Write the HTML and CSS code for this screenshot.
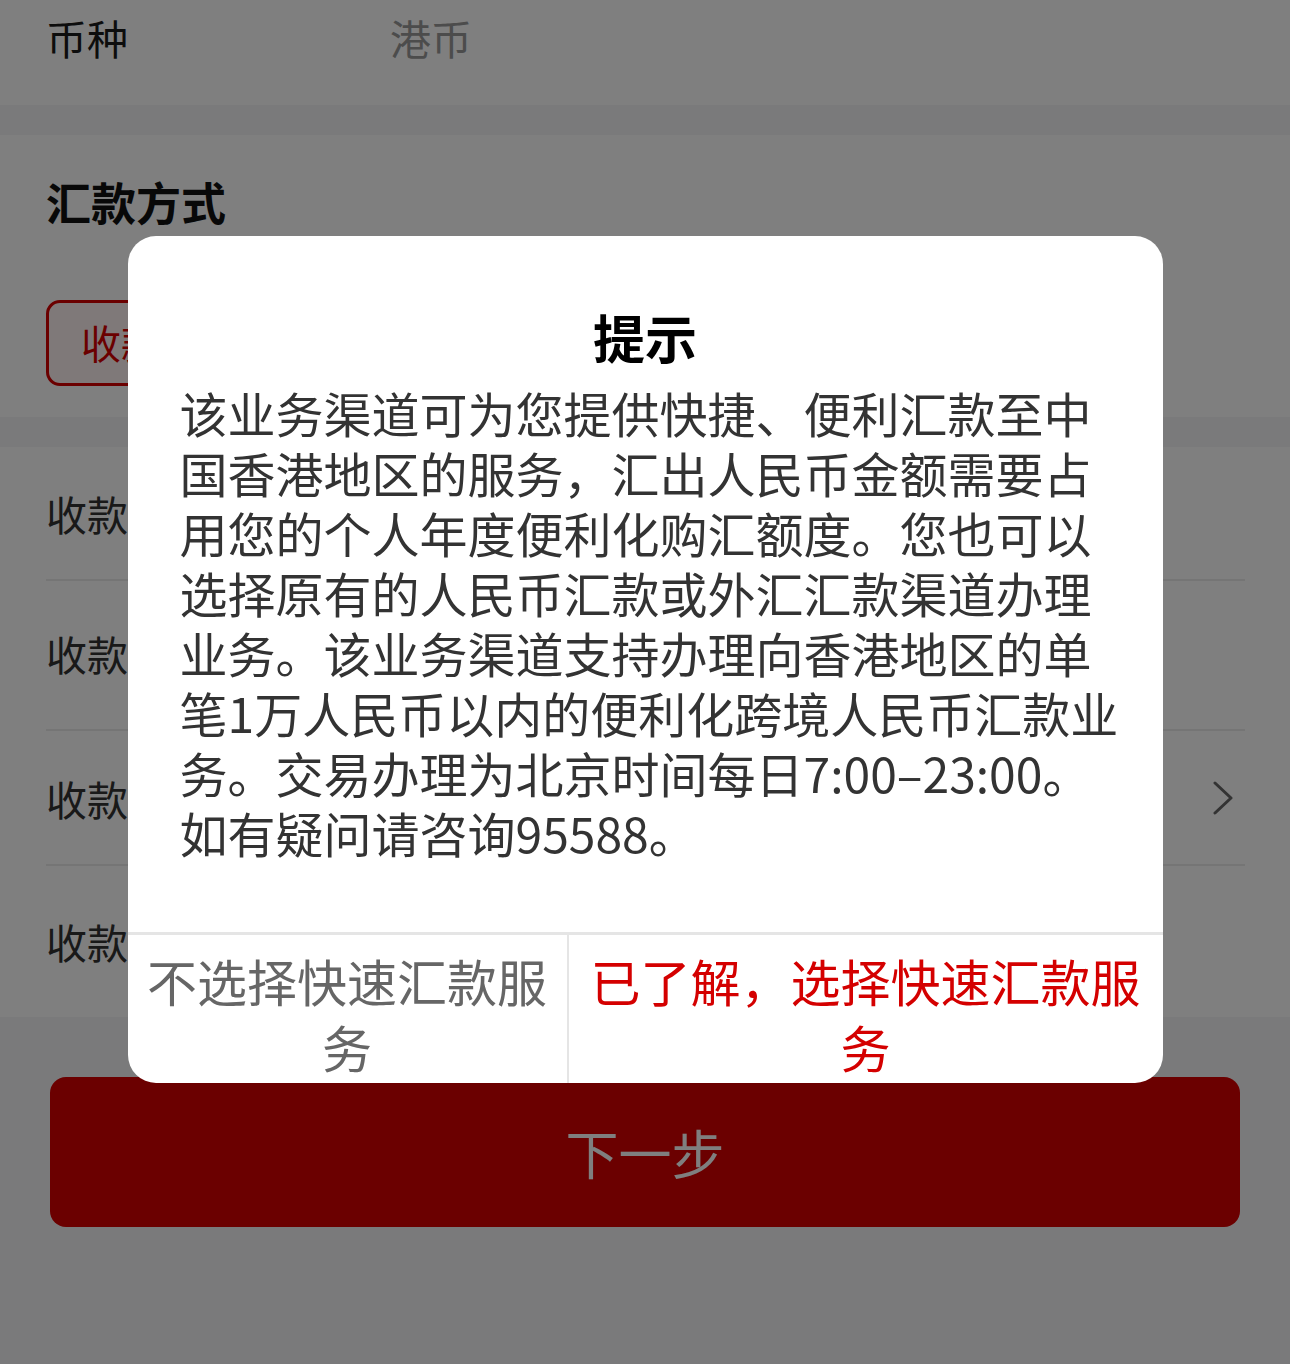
FILE: index.html
```html
<!DOCTYPE html>
<html lang="zh-CN">
<head>
<meta charset="utf-8">
<title>汇款</title>
<link rel="stylesheet" href="styles.css">
</head>
<body>
<div class="page">
  <section class="card currency">
    <span class="label">币种</span>
    <span class="value">港币</span>
  </section>

  <section class="card method">
    <h2 class="method-title">汇款方式</h2>
    <div class="method-options">
      <div class="option active">收款人账户汇款</div>
      <div class="option">收款人手机号汇款</div>
    </div>
  </section>

  <section class="card list">
    <div class="list-row r1"><span class="row-label">收款人姓名</span></div>
    <div class="list-row r2"><span class="row-label">收款人账号</span></div>
    <div class="list-row r3"><span class="row-label">收款银行</span>
      <svg class="chev" viewBox="0 0 20 34" width="20" height="34"><path d="M2 2 L18 17 L2 32" fill="none" stroke="#666" stroke-width="3" stroke-linecap="round" stroke-linejoin="round"/></svg>
    </div>
    <div class="list-row r4"><span class="row-label">收款人地址</span></div>
  </section>

  <div class="footer">
    <button class="next">下一步</button>
  </div>
</div>

<div class="overlay">
  <div class="modal">
    <h3 class="modal-title">提示</h3>
    <p class="modal-body">该业务渠道可为您提供快捷、便利汇款至中国香港地区的服务，汇出人民币金额需要占用您的个人年度便利化购汇额度。您也可以选择原有的人民币汇款或外汇汇款渠道办理业务。该业务渠道支持办理向香港地区的单笔1万人民币以内的便利化跨境人民币汇款业务。交易办理为北京时间每日7:00–23:00。如有疑问请咨询95588。</p>
    <div class="modal-actions">
      <div class="act cancel">不选择快速汇款服务</div>
      <div class="act confirm">已了解，选择快速汇款服务</div>
    </div>
  </div>
</div>
</body>
</html>
```

FILE: styles.css
```css
html, body {
  margin: 0;
  padding: 0;
}
body {
  background: #f4f5f6;
  font-family: "Noto Sans CJK SC", "Noto Sans", sans-serif;
  width: 1290px;
  height: 1364px;
  overflow: hidden;
}
.page {
  display: flex;
  flex-direction: column;
  gap: 30px;
}
.card {
  background: #fff;
}
.currency {
  height: 105px;
  box-sizing: border-box;
  padding: 7px 46px 0;
  display: flex;
  font-size: 41px;
  line-height: 60px;
}
.currency .label {
  width: 344px;
  color: #1a1a1a;
}
.currency .value {
  color: #999;
}
.method {
  height: 282px;
  box-sizing: border-box;
  padding: 34px 46px 0;
}
.method-title {
  margin: 0;
  font-size: 45px;
  line-height: 66px;
  font-weight: 700;
  color: #111;
}
.method-options {
  margin-top: 65px;
  display: flex;
  gap: 30px;
}
.option {
  height: 86px;
  box-sizing: border-box;
  padding: 0 32px;
  border: 3px solid #ddd;
  border-radius: 14px;
  font-size: 40px;
  line-height: 78px;
  color: #333;
}
.option.active {
  border-color: #d60000;
  background: #fff2f2;
  color: #d60000;
}
.list {
  height: 570px;
  padding: 0 45px 0 46px;
}
.list-row {
  display: flex;
  align-items: center;
  border-bottom: 2px solid #ebebeb;
  font-size: 41px;
  color: #333;
  box-sizing: border-box;
}
.list-row.r1 { height: 134px; }
.list-row.r2 { height: 150px; align-items: flex-end; padding-bottom: 46px; }
.list-row.r3 { height: 135px; justify-content: space-between; }
.list-row.r4 { height: 149px; border-bottom: none; align-items: flex-start; padding-top: 45px; }
.chev {
  margin-right: 12px;
}
.footer {
  padding: 30px 50px 0;
}
.next {
  display: block;
  width: 1190px;
  height: 150px;
  border: none;
  border-radius: 16px;
  background: #d60000;
  color: #fff;
  font-family: "Noto Sans CJK SC", "Noto Sans", sans-serif;
  font-size: 53px;
  padding: 0;
}

.overlay {
  position: fixed;
  inset: 0;
  background: rgba(0, 0, 0, 0.5);
  display: flex;
  justify-content: center;
  align-items: flex-start;
  padding-top: 236px;
}
.modal {
  width: 1035px;
  background: #fff;
  border-radius: 28px;
  overflow: hidden;
}
.modal-title {
  margin: 62px 0 0;
  text-align: center;
  font-size: 52px;
  line-height: 78px;
  font-weight: 700;
  color: #000;
}
.modal-body {
  margin: 6px 0 0;
  padding: 0 40px 70px 52px;
  font-size: 48px;
  line-height: 60px;
  color: #333;
}
.modal-actions {
  display: flex;
  border-top: 3px solid #e5e5e5;
  height: 148px;
}
.act {
  box-sizing: border-box;
  padding: 12px 16px 0;
  font-size: 50px;
  line-height: 66px;
  text-align: center;
}
.cancel {
  width: 441px;
  color: #666;
  border-right: 2px solid #e5e5e5;
}
.confirm {
  flex: 1;
  color: #d40000;
  padding-left: 14px;
  padding-right: 14px;
}
```
